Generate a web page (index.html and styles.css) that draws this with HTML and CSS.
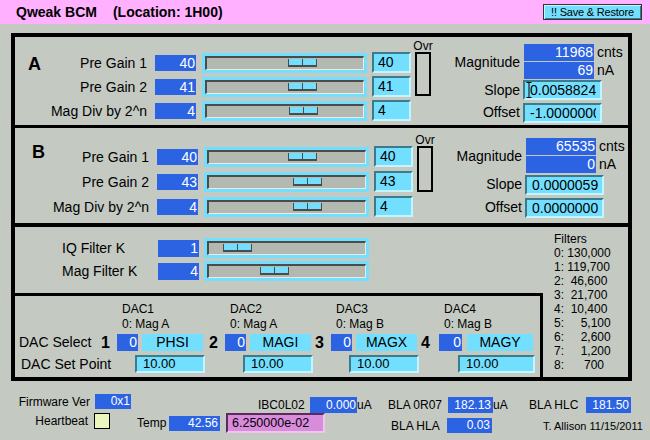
FILE: index.html
```html
<!DOCTYPE html>
<html>
<head>
<meta charset="utf-8">
<title>Qweak BCM</title>
<link rel="stylesheet" href="styles.css">
</head>
<body>
<header class="topbar">
  <div class="title">Qweak BCM</div>
  <div class="title loc">(Location: 1H00)</div>
  <div class="sr-btn">!! Save &amp; Restore</div>
</header>

<main class="frame">
  <section class="chan chan-a">
    <div class="letter">A</div>
    <div class="rows">
      <div class="row"><span class="lbl">Pre Gain 1</span><span class="blue val">40</span><div class="slider"><div class="trough"><div class="thumb" style="margin-left:81px"></div></div></div><span class="sunk rv">40</span></div>
      <div class="row"><span class="lbl">Pre Gain 2</span><span class="blue val">41</span><div class="slider"><div class="trough"><div class="thumb" style="margin-left:81px"></div></div></div><span class="sunk rv">41</span></div>
      <div class="row"><span class="lbl">Mag Div by 2^n</span><span class="blue val">4</span><div class="slider"><div class="trough"><div class="thumb" style="margin-left:82px"></div></div></div><span class="sunk rv">4</span></div>
    </div>
    <div class="ovr"><span class="ovr-lbl">Ovr</span><div class="ovr-box"></div></div>
    <div class="meas">
      <span class="mlbl">Magnitude</span>
      <div class="mag">
        <div class="mag-row"><span class="blue mval">11968</span><span class="unit">cnts</span></div>
        <div class="mag-row"><span class="blue mval">69</span><span class="unit">nA</span></div>
      </div>
      <span class="mlbl">Slope</span>
      <div class="sunk coef slope"><svg class="ibeam" width="6" height="16" viewBox="0 0 6 16"><path d="M0.5 0.5H5.5M3 0.5V15.5M0.5 15.5H5.5" stroke="#000" stroke-width="1" fill="none"/></svg><span class="txt">0.0058824</span></div>
      <span class="mlbl">Offset</span>
      <div class="sunk coef offset"><span class="txt">-1.0000000</span></div>
    </div>
  </section>

  <section class="chan chan-b">
    <div class="letter">B</div>
    <div class="rows">
      <div class="row"><span class="lbl">Pre Gain 1</span><span class="blue val">40</span><div class="slider"><div class="trough"><div class="thumb" style="margin-left:79px"></div></div></div><span class="sunk rv">40</span></div>
      <div class="row"><span class="lbl">Pre Gain 2</span><span class="blue val">43</span><div class="slider"><div class="trough"><div class="thumb" style="margin-left:84px"></div></div></div><span class="sunk rv">43</span></div>
      <div class="row"><span class="lbl">Mag Div by 2^n</span><span class="blue val">4</span><div class="slider"><div class="trough"><div class="thumb" style="margin-left:84px"></div></div></div><span class="sunk rv">4</span></div>
    </div>
    <div class="ovr"><span class="ovr-lbl">Ovr</span><div class="ovr-box"></div></div>
    <div class="meas">
      <span class="mlbl">Magnitude</span>
      <div class="mag">
        <div class="mag-row"><span class="blue mval">65535</span><span class="unit">cnts</span></div>
        <div class="mag-row"><span class="blue mval">0</span><span class="unit">nA</span></div>
      </div>
      <span class="mlbl">Slope</span>
      <div class="sunk coef slope"><span class="txt">0.0000059</span></div>
      <span class="mlbl">Offset</span>
      <div class="sunk coef offset"><span class="txt">0.0000000</span></div>
    </div>
  </section>

  <section class="filt">
    <div class="filt-left">
      <div class="frows">
        <div class="frow"><span class="flbl">IQ Filter K</span><span class="blue val">1</span><div class="slider"><div class="trough"><div class="thumb" style="margin-left:14px"></div></div></div></div>
        <div class="frow"><span class="flbl">Mag Filter K</span><span class="blue val">4</span><div class="slider"><div class="trough"><div class="thumb" style="margin-left:51px"></div></div></div></div>
      </div>
      <div class="dac">
        <div></div>
        <div class="dlbl">DAC1<br>0: Mag A</div>
        <div class="dlbl">DAC2<br>0: Mag A</div>
        <div class="dlbl">DAC3<br>0: Mag B</div>
        <div class="dlbl">DAC4<br>0: Mag B</div>

        <div class="dname-lbl">DAC Select</div>
        <div class="sel"><span class="dig">1</span><span class="blue selv">0</span><span class="selname">PHSI</span></div>
        <div class="sel"><span class="dig">2</span><span class="blue selv">0</span><span class="selname">MAGI</span></div>
        <div class="sel"><span class="dig">3</span><span class="blue selv">0</span><span class="selname">MAGX</span></div>
        <div class="sel last"><span class="dig">4</span><span class="blue selv">0</span><span class="selname">MAGY</span></div>

        <div class="dname-lbl sp-lbl">DAC Set Point</div>
        <div class="sunk sp">10.00</div>
        <div class="sunk sp">10.00</div>
        <div class="sunk sp">10.00</div>
        <div class="sunk sp last">10.00</div>
      </div>
    </div>
    <div class="flist">Filters
0: 130,000
1: 119,700
2:  46,600
3:  21,700
4:  10,400
5:     5,100
6:     2,600
7:     1,200
8:      700</div>
  </section>
</main>

<footer class="bottom">
  <div class="brow brow1">
    <div class="grp g-fw"><span class="blbl w-fw">Firmware Ver</span><span class="blue bv v-fw">0x1</span></div>
    <div class="grp g-ibc"><span class="blbl w-ibc">IBC0L02</span><span class="blue bv v-ibc">0.000</span><span class="bunit">uA</span></div>
    <div class="grp g-r07"><span class="blbl w-r07">BLA 0R07</span><span class="blue bv v-bla">182.13</span><span class="bunit">uA</span></div>
    <div class="grp g-hlc"><span class="blbl w-hlc">BLA HLC</span><span class="blue bv v-bla">181.50</span></div>
  </div>
  <div class="brow brow2">
    <div class="grp g-hb"><span class="blbl w-hb">Heartbeat</span><span class="hb-box"></span></div>
    <div class="grp g-temp"><span class="blbl w-temp">Temp</span><span class="blue bv v-temp">42.56</span><span class="pink">6.250000e-02</span></div>
    <div class="grp g-hla"><span class="blbl w-hla">BLA HLA</span><span class="blue bv v-bla">0.03</span></div>
    <div class="credit">T. Allison 11/15/2011</div>
  </div>
</footer>
</body>
</html>
```

FILE: styles.css
```css
* { box-sizing: border-box; }
html, body { margin: 0; padding: 0; }
body {
  width: 650px;
  height: 440px;
  overflow: hidden;
  background: #c4c9c2;
  color: #000;
  font-family: "Liberation Sans", Arial, sans-serif;
  font-size: 14px;
}

/* header */
.topbar {
  height: 24px;
  background: #ffb0ff;
  display: flex;
  align-items: center;
  padding-left: 16px;
}
.title { font-weight: bold; font-size: 14px; line-height: 16px; white-space: nowrap; }
.loc { margin-left: 16px; }
.sr-btn {
  margin-left: auto;
  margin-right: 8px;
  align-self: flex-start;
  margin-top: 4px;
  width: 99px;
  height: 16px;
  background: #73dfff;
  border: 1px solid #333;
  box-shadow: inset 1px 1px 0 #c9f5ff, inset -1px -1px 0 #3b7b8b;
  font-size: 11px;
  line-height: 14px;
  letter-spacing: -0.2px;
  text-align: center;
  white-space: nowrap;
}

/* main frame */
.frame {
  margin: 9px 0 0 11px;
  width: 621px;
  height: 348px;
  border: 4px solid #000;
  display: flex;
  flex-direction: column;
}
.chan { display: flex; align-items: flex-start; }
.chan-a { height: 91px; border-bottom: 3px solid #000; }
.chan-b { height: 99px; border-bottom: 4px solid #000; padding-left: 2px; }

.letter { width: 25px; padding-left: 13px; font-weight: bold; font-size: 18px; line-height: 18px; }
.chan-a .letter { margin-top: 18px; }
.chan-b .letter { margin-top: 15px; padding-left: 15px; width: 25px; }

.rows { display: flex; flex-direction: column; }
.chan-a .rows { padding-top: 15px; gap: 3px; }
.chan-b .rows { padding-top: 18px; gap: 4px; }
.row { display: flex; align-items: center; height: 21px; }
.lbl { width: 107px; margin-right: 8px; text-align: right; white-space: nowrap; font-size: 14px; line-height: 16px; }

.blue { background: #2b63e3; color: #fff; text-align: right; padding-right: 1px; white-space: nowrap; }
.val { width: 41px; height: 16px; line-height: 16px; font-size: 14px; }

.slider { width: 165px; height: 20px; padding: 3px; background: #73dfff; margin-left: 6px; }
.trough {
  height: 14px;
  background: #b3b8b1;
  border-style: solid;
  border-width: 2px 1px 1px 2px;
  border-color: #4b4b4b #e8ebe6 #e8ebe6 #4b4b4b;
}
.thumb {
  width: 29px;
  height: 8px;
  margin-top: 1px;
  background: #73dfff linear-gradient(#4b4b4b, #4b4b4b) center / 1px 100% no-repeat;
  border: 1px solid #4b4b4b;
  border-top: 0;
  border-bottom-width: 2px;
}

.sunk {
  background: #73dfff;
  border: 2px solid;
  border-color: #3b7b8b #c4f4ff #c4f4ff #3b7b8b;
  white-space: nowrap;
  overflow: hidden;
}
.rv { width: 39px; height: 21px; margin-left: 5px; padding-left: 4px; font-size: 14px; line-height: 17px; }

/* overflow indicator */
.ovr { margin-left: 4px; width: 16px; display: flex; flex-direction: column; align-items: center; }
.chan-a .ovr { padding-top: 3px; }
.chan-b .ovr { padding-top: 6px; }
.ovr-lbl { font-size: 12px; line-height: 12px; white-space: nowrap; }
.ovr-box { width: 16px; border: 2px solid #000; }
.chan-a .ovr-box { height: 44px; }
.chan-b .ovr-box { height: 46px; }

/* magnitude / slope / offset */
.meas { margin-left: 22px; display: grid; grid-template-columns: 67px auto; column-gap: 3px; align-items: center; }
.chan-a .meas { margin-top: 7px; }
.chan-b .meas { margin-top: 10px; }
.mlbl { text-align: right; font-size: 14px; white-space: nowrap; }
.mag { display: flex; flex-direction: column; gap: 1px; margin-left: 1px; }
.mag-row { display: flex; align-items: center; }
.mval { width: 70px; height: 17px; line-height: 17px; font-size: 14px; }
.unit { margin-left: 3px; font-size: 14px; line-height: 17px; }
.coef { width: 79px; height: 20px; padding: 0 4px 0 5px; font-size: 14px; line-height: 16px; position: relative; }
.coef .txt { display: block; overflow: hidden; white-space: nowrap; }
.ibeam { position: absolute; left: 1px; top: 0; }
.chan-a .slope { margin-top: 1px; }
.chan-a .offset { margin-top: 3px; }
.chan-b .slope { margin-top: 2px; }
.chan-b .offset { margin-top: 3px; }

/* filter section */
.filt { flex: 1; display: flex; }
.filt-left { width: 528px; display: flex; flex-direction: column; }
.frows { height: 66px; padding-top: 11px; display: flex; flex-direction: column; gap: 3px; }
.frow { display: flex; align-items: center; height: 20px; padding-left: 47px; }
.flbl { width: 96px; font-size: 14px; white-space: nowrap; }
.frow .val { height: 17px; line-height: 17px; }
.frow .slider { margin-left: 5px; }

.flist { padding: 5px 0 0 11px; font-size: 12px; line-height: 14px; white-space: pre; }

/* DAC box */
.dac {
  flex: 1;
  border-top: 3px solid #000;
  border-right: 3px solid #000;
  padding: 6px 0 0 4px;
  display: grid;
  grid-template-columns: 98px 108px 106px 108px 1fr;
  grid-template-rows: 32px 21px 18px;
  align-items: start;
}
.dlbl { font-size: 12px; line-height: 15px; margin-left: 5px; white-space: nowrap; }
.dname-lbl { font-size: 14px; line-height: 17px; white-space: nowrap; }
.sp-lbl { line-height: 18px; margin-left: 2px; }
.sel { display: flex; }
.dig { width: 16px; margin-left: -16px; font-weight: bold; font-size: 16px; line-height: 17px; }
.selv { width: 21px; height: 17px; line-height: 17px; font-size: 14px; }
.selname { width: 61px; height: 17px; margin-left: 4px; background: #73dfff; text-align: center; font-size: 14px; line-height: 17px; }
.sel.last .dig { margin-left: -18px; width: 18px; }
.sel.last .selv { width: 23px; }
.sel.last .selname { width: 66px; margin-left: 5px; }
.sp { width: 70px; height: 18px; margin-left: 18px; padding-left: 6px; font-size: 13px; line-height: 14px; }
.sp.last { width: 77px; margin-left: 19px; }

/* bottom */
.bottom { padding: 13px 0 0 15px; }
.brow { display: flex; align-items: flex-start; }
.brow1 { height: 19px; }
.brow2 { height: 20px; }
.grp { display: flex; align-items: center; font-size: 12px; white-space: nowrap; }
.blbl { white-space: nowrap; }
.bv { height: 15px; line-height: 15px; font-size: 12px; }
.bunit { font-size: 12px; }

.g-fw { height: 15px; }
.w-fw { width: 75px; text-align: right; margin-right: 5px; }
.v-fw { width: 36px; }

.g-ibc { height: 16px; margin-left: 127px; margin-top: 3px; width: 114px; }
.w-ibc { width: 47px; margin-right: 5px; }
.v-ibc { width: 47px; height: 16px; line-height: 16px; }

.g-r07 { height: 16px; margin-left: 16px; margin-top: 3px; width: 120px; }
.w-r07 { width: 55px; margin-right: 5px; }
.v-bla { width: 45px; height: 16px; line-height: 16px; padding-right: 2px; }

.g-hlc { height: 16px; margin-left: 21px; margin-top: 3px; }
.w-hlc { width: 53px; margin-right: 4px; }

.g-hb { height: 16px; }
.w-hb { width: 73px; text-align: right; margin-right: 6px; }
.hb-box { width: 16px; height: 16px; background: #ebf5bd; border: 1px solid #000; }

.g-temp { height: 20px; margin-left: 27px; }
.w-temp { width: 32px; }
.v-temp { width: 51px; padding-right: 2px; }
.pink {
  width: 99px;
  height: 20px;
  margin-left: 6px;
  padding-left: 4px;
  background: #d98bdc;
  border: 2px solid;
  border-color: #5d2a5d #f0c4f0 #f0c4f0 #5d2a5d;
  font-size: 12.5px;
  line-height: 16px;
  white-space: nowrap;
  overflow: hidden;
}

.g-hla { height: 15px; margin-left: 66px; margin-top: 5px; }
.w-hla { width: 56px; }
.g-hla .v-bla { height: 15px; line-height: 15px; }

.credit { margin-left: 51px; margin-top: 7px; font-size: 11px; line-height: 13px; white-space: nowrap; }
```
